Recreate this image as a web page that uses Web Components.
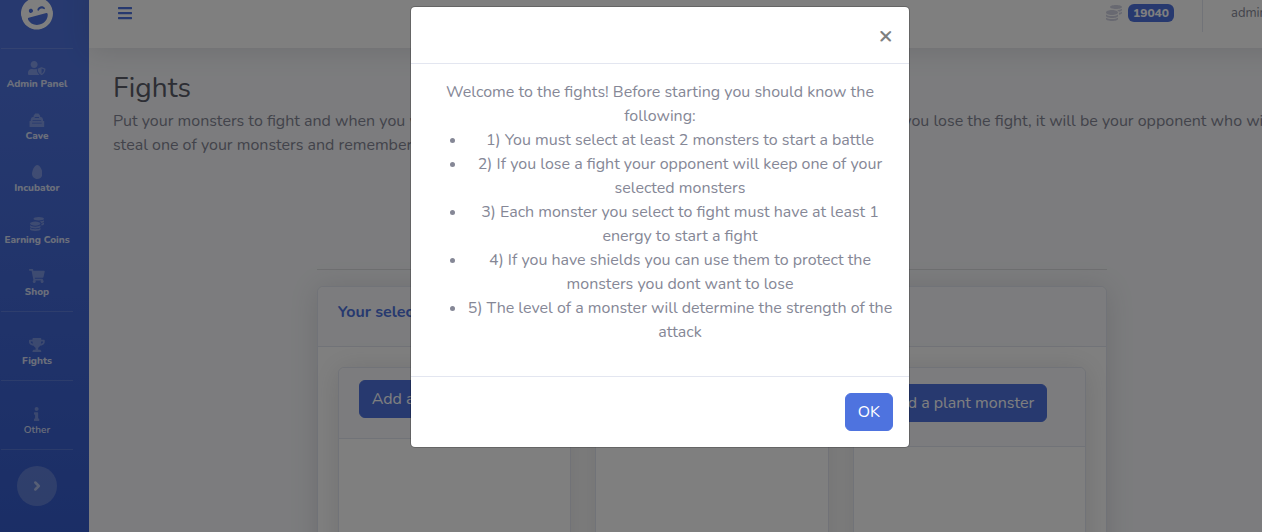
<!DOCTYPE html>
<html lang="en">
<head>
<meta charset="utf-8">
<title>Fights</title>
<style>
html,body{height:100%;margin:0}
body{overflow:hidden;font:400 16px/24px Nunito,"Open Sans",sans-serif;color:#858796;background:#f8f9fc}
</style>
</head>
<body>
<game-shell></game-shell>
<script>
const ICONS = {
  bars:['0 0 448 512','<path d="M16 132h416c8.800 0 16-7.200 16-16V76c0-8.800-7.200-16-16-16H16C7.200 60 0 67.200 0 76v40c0 8.800 7.200 16 16 16zm0 160h416c8.800 0 16-7.200 16-16v-40c0-8.800-7.200-16-16-16H16c-8.800 0-16 7.200-16 16v40c0 8.800 7.200 16 16 16zm0 160h416c8.800 0 16-7.200 16-16v-40c0-8.800-7.200-16-16-16H16c-8.800 0-16 7.200-16 16v40c0 8.800 7.200 16 16 16z"/>'],
  laugh:['0 0 496 512','<path d="M248 8C111 8 0 119 0 256s111 248 248 248 248-111 248-248S385 8 248 8zm20.100 198.100c4-25.200 34.200-42.100 59.900-42.100s55.900 16.900 59.900 42.100c1.700 11.100-11.400 18.300-19.800 10.800l-9.500-8.500c-14.800-13.200-46.200-13.200-61 0L288 217c-8.400 7.400-21.600.3-19.900-10.900zM168 160c17.700 0 32 14.300 32 32s-14.300 32-32 32-32-14.300-32-32 14.300-32 32-32zM106 288h284c9.600 0 17 8.200 16 17.400C397 376 330 432 255 432h-14C165 432 99 376 90 305.400 89 296.200 96 288 106 288z"/>'],
  shield:['0 0 640 512','<path d="M622.300 271.100l-115.200-45c-4.100-1.600-12.600-3.700-22.200 0l-115.200 45c-10.700 4.200-17.700 14-17.700 24.900 0 111.600 68.700 188.800 132.900 213.900 9.600 3.700 18 1.600 22.200 0C558.400 489.900 640 420.500 640 296c0-10.900-7-20.700-17.700-24.900zM496 462.400V273.300l95.500 37.300c-5.600 87.100-60.900 135.400-95.500 151.800zM224 256c70.700 0 128-57.300 128-128S294.700 0 224 0 96 57.300 96 128s57.300 128 128 128zm96 40c0-2.500.8-4.800 1.100-7.200-2.500-.1-4.900-.8-7.500-.8h-16.700c-22.200 10.200-46.900 16-72.900 16s-50.600-5.800-72.900-16h-16.700C60.200 288 0 348.200 0 422.400V464c0 26.500 21.500 48 48 48h352c6.800 0 13.300-1.500 19.200-4-54-42.900-99.200-116.700-99.200-212z"/>'],
  cave:['0 0 576 512','<path fill-rule="evenodd" d="M230 20h116l60 70v50l74 20 32 70v60l44 0v200c0 14-8 22-22 22H42c-14 0-22-8-22-22V290h44v-60l32-70 74-20V90zM210 180h156v-36H210zM130 286h316v-34H130zM110 386h356v-34H110z"/>'],
  egg:['0 0 384 512','<path d="M192 0C86 0 0 214 0 320s86 192 192 192 192-86 192-192S298 0 192 0z"/>'],
  coins:['0 0 512 512','<path d="M0 405.300V448c0 35.300 86 64 192 64s192-28.700 192-64v-42.700C342.700 434.400 267.200 448 192 448S41.300 434.400 0 405.300zM320 128c106 0 192-28.700 192-64S426 0 320 0 128 28.700 128 64s86 64 192 64zM0 300.400V352c0 35.300 86 64 192 64s192-28.700 192-64v-51.600c-41.300 34-116.900 51.600-192 51.600S41.300 334.400 0 300.400zm416 11c57.300-11.100 96-31.700 96-55.400v-42.700c-23.200 16.400-57.300 27.600-96 34.500v63.600zM192 160C86 160 0 195.800 0 240s86 80 192 80 192-35.800 192-80-86-80-192-80zm219.300 56.300c60-10.800 100.700-32 100.700-56.300v-42.700c-35.500 25.100-96.500 38.600-160.700 41.800 29.500 14.300 51.200 33.500 60 57.200z"/>'],
  cart:['0 0 576 512','<path d="M528.100 301.300l47.300-208C578.800 78.300 567.400 64 552 64H159.200L150 19.200C147.800 8 137.900 0 126.500 0H24C10.700 0 0 10.700 0 24v16c0 13.300 10.700 24 24 24h69.900l70.200 343.400C147.300 417.100 136 435.200 136 456c0 30.900 25.100 56 56 56s56-25.100 56-56c0-15.700-6.400-29.800-16.800-40h209.600C430.400 426.200 424 440.300 424 456c0 30.900 25.100 56 56 56s56-25.100 56-56c0-22.200-12.900-41.300-31.600-50.400l5.500-24.300c3.400-15-8-29.300-23.400-29.300H218.100l-6.500-32h293.100c11.200 0 20.900-7.800 23.400-18.700z"/>'],
  trophy:['0 0 576 512','<path d="M552 64H448V24c0-13.300-10.700-24-24-24H152c-13.300 0-24 10.700-24 24v40H24C10.700 64 0 74.700 0 88v56c0 35.700 22.500 72.400 61.900 100.700 31.500 22.700 69.800 37.100 110 41.700C203.300 338.500 240 360 240 360v72h-48c-35.300 0-64 20.700-64 56v12c0 6.600 5.400 12 12 12h296c6.600 0 12-5.400 12-12v-12c0-35.300-28.700-56-64-56h-48v-72s36.700-21.500 68.100-73.600c40.300-4.600 78.600-19 110-41.700 39.300-28.300 61.900-65 61.900-100.700V88c0-13.300-10.700-24-24-24zM99.300 192.800C74.900 175.200 64 155.600 64 144v-16h64.200c1 32.600 5.800 61.200 12.800 86.200-15.100-5.200-29.200-12.400-41.700-21.400zM512 144c0 16.100-17.700 36.100-35.300 48.800-12.500 9-26.700 16.200-41.800 21.400 7-25 11.800-53.600 12.800-86.200H512v16z"/>'],
  info:['0 0 192 512','<path d="M20 424.200h20V279.800H20c-11 0-20-9-20-20V212c0-11 9-20 20-20h112c11 0 20 9 20 20v212.200h20c11 0 20 9 20 20V492c0 11-9 20-20 20H20c-11 0-20-9-20-20v-47.800c0-11 9-20 20-20zM96 0C56.200 0 24 32.200 24 72s32.200 72 72 72 72-32.200 72-72S135.800 0 96 0z"/>'],
  angle:['0 0 256 512','<path d="M74 144l112 112L74 368" fill="none" stroke="currentColor" stroke-width="80" stroke-linejoin="round" stroke-linecap="round"/>']
};

function define(name, html, setup) {
  const template = document.createElement('template');
  template.innerHTML = html;
  customElements.define(name, class extends HTMLElement {
    constructor() {
      super();
      this.attachShadow({mode:'open'}).append(template.content.cloneNode(true));
    }
    connectedCallback() { if (setup) setup(this, this.shadowRoot); }
  });
}

define('fa-icon', `<style>
:host{display:inline-flex;justify-content:center;height:var(--icon-size,14px)}
svg{display:block;height:100%;width:auto;fill:currentColor}
</style><svg aria-hidden="true"></svg>`, (host, root) => {
  const [box, shape] = ICONS[host.getAttribute('name')];
  const svg = root.querySelector('svg');
  svg.setAttribute('viewBox', box);
  svg.innerHTML = shape;
});

define('nav-link', `<style>
:host{display:block;height:52px}
a{display:flex;flex-direction:column;align-items:center;padding-top:10px;color:rgba(255,255,255,.8);text-decoration:none;font-size:10px;line-height:18px;font-weight:800;white-space:nowrap}
:host([collapsible]) a{font-weight:600}
::slotted(fa-icon){color:rgba(255,255,255,.3)}
</style><a href="#"><slot name="icon"></slot><span><slot></slot></span></a>`);

define('side-bar', `<style>
:host{display:block;flex:none;width:104px;background:linear-gradient(180deg,#4e73df 10%,#224abe 100%) 0 0/100% 920px no-repeat #224abe}
.brand{display:flex;height:70px;align-items:center;justify-content:center;color:#fff;--icon-size:33px}
.brand fa-icon{transform:rotate(-15deg)}
hr{margin:0 16px;border:0;border-top:1px solid rgba(255,255,255,.15)}
.group{padding-top:2px}
.group.spaced{padding-top:16px}
button{display:flex;align-items:center;justify-content:center;width:40px;height:40px;margin:16px auto;padding:0;border:0;border-radius:50%;background:rgba(255,255,255,.2);color:rgba(255,255,255,.5);--icon-size:16px}
</style>
<a class="brand" href="#" aria-label="Home"><fa-icon name="laugh"></fa-icon></a>
<hr>
<div class="group">
<nav-link><fa-icon slot="icon" name="shield"></fa-icon>Admin Panel</nav-link>
<nav-link><fa-icon slot="icon" name="cave"></fa-icon>Cave</nav-link>
<nav-link><fa-icon slot="icon" name="egg"></fa-icon>Incubator</nav-link>
<nav-link><fa-icon slot="icon" name="coins"></fa-icon>Earning Coins</nav-link>
<nav-link><fa-icon slot="icon" name="cart"></fa-icon>Shop</nav-link>
</div>
<hr>
<div class="group spaced"><nav-link><fa-icon slot="icon" name="trophy"></fa-icon>Fights</nav-link></div>
<hr>
<div class="group spaced"><nav-link collapsible><fa-icon slot="icon" name="info"></fa-icon>Other</nav-link></div>
<hr>
<button aria-label="Toggle sidebar"><fa-icon name="angle"></fa-icon></button>`);

define('top-bar', `<style>
:host{display:flex;align-items:center;height:70px;padding:0 15px 0 17px;box-sizing:border-box;background:#fff;box-shadow:0 2px 28px rgba(58,59,69,.15)}
button{display:flex;padding:12px;border:0;background:none;color:#4e73df;--icon-size:16px}
.coins{display:flex;align-items:center;gap:6px;margin-left:auto;color:#d1d3e2;--icon-size:16px}
.badge{padding:3px 5px;border-radius:6px;background:#4e73df;color:#fff;font-size:12px;line-height:12px;font-weight:800}
.line{width:1px;height:38px;margin:0 28px;background:#e3e6f0}
.user{width:89px;color:#858796;font-size:13px;text-decoration:none}
</style>
<button aria-label="Menu"><fa-icon name="bars"></fa-icon></button>
<div class="coins"><fa-icon name="coins"></fa-icon><span class="badge">19040</span></div>
<div class="line"></div>
<a class="user" href="#">admin</a>`);

define('primary-button', `<style>
:host{display:inline-block}
button{display:block;height:38px;padding:0 12px;border:1px solid #4e73df;border-radius:6px;background:#4e73df;color:#fff;font:inherit;white-space:nowrap}
</style><button type="button"><slot></slot></button>`);

define('panel-card', `<style>
:host{display:block;box-sizing:border-box;border:1px solid #e3e6f0;border-radius:6px;background:#fff;box-shadow:0 2px 28px rgba(58,59,69,.15)}
header{padding:var(--head-pad,13px 20px 22px);border-bottom:1px solid #e3e6f0;border-radius:6px 6px 0 0;background:#f8f9fc}
.body{padding:20px;min-height:160px}
</style><header><slot name="header"></slot></header><div class="body"><slot></slot></div>`);

define('fights-page', `<style>
:host{display:block;padding:24px}
h1{margin:0 0 4px;color:#5a5c69;font-size:28px;line-height:33px;font-weight:400}
p{margin:0;white-space:nowrap}
.arena{width:66%;margin:112px auto 0}
hr{margin:0 0 16px;border:0;border-top:1px solid rgba(0,0,0,.1)}
h2{margin:0;color:#4e73df;font-size:16px;line-height:24px;font-weight:700}
.types{display:grid;grid-template-columns:repeat(3,1fr);gap:24px}
.types panel-card{--head-pad:12px 20px 20px}
.types panel-card:last-child{--head-pad:16px 20px 24px}
primary-button{display:block}
</style>
<h1>Fights</h1>
<p>Put your monsters to fight and when you win you will steal one of the monsters from your opponent careful, if you lose the fight, it will be your opponent who will<br>steal one of your monsters and remember to use shields to protect them.</p>
<div class="arena">
<hr>
<panel-card><h2 slot="header">Your selected monsters</h2>
<div class="types">
<panel-card><primary-button slot="header">Add a fire monster</primary-button></panel-card>
<panel-card><primary-button slot="header">Add a water monster</primary-button></panel-card>
<panel-card><primary-button slot="header">Add a plant monster</primary-button></panel-card>
</div></panel-card>
</div>`);

define('modal-dialog', `<style>
:host{display:block;position:absolute;inset:0;background:rgba(0,0,0,.5)}
section{width:500px;max-width:100%;box-sizing:border-box;margin:28px auto;border:1px solid rgba(0,0,0,.2);border-radius:5px;background:#fff;background-clip:padding-box}
header{display:flex;justify-content:flex-end;height:56px;border-bottom:1px solid #e3e6f0}
header button{padding:16px;border:0;background:none;color:#000;opacity:.5;font:700 24px/24px Nunito,"Open Sans",sans-serif}
.body{padding:16px;text-align:center}
footer{display:flex;justify-content:flex-end;padding:16px;border-top:1px solid #e3e6f0}
</style>
<section role="dialog" aria-label="Fight rules">
<header><button aria-label="Close">×</button></header>
<div class="body"><slot></slot></div>
<footer><primary-button>OK</primary-button></footer>
</section>`, (host, root) => {
  const close = () => host.remove();
  root.querySelector('header button').addEventListener('click', close);
  root.querySelector('primary-button').addEventListener('click', close);
});

define('game-shell', `<style>
:host{display:flex;position:relative;width:calc(100% + 88px);height:calc(100vh + 22px);margin:-22px 0 0 -15px;overflow:hidden}
main{flex:1;min-width:0}
ul{margin:0 0 16px;padding-left:40px}
</style>
<side-bar></side-bar>
<main><top-bar></top-bar><fights-page></fights-page></main>
<modal-dialog>
<div>Welcome to the fights! Before starting you should know the following:</div>
<ul>
<li>1) You must select at least 2 monsters to start a battle</li>
<li>2) If you lose a fight your opponent will keep one of your selected monsters</li>
<li>3) Each monster you select to fight must have at least 1 energy to start a fight</li>
<li>4) If you have shields you can use them to protect the monsters you dont want to lose</li>
<li>5) The level of a monster will determine the strength of the attack</li>
</ul>
</modal-dialog>`);
</script>
</body>
</html>
